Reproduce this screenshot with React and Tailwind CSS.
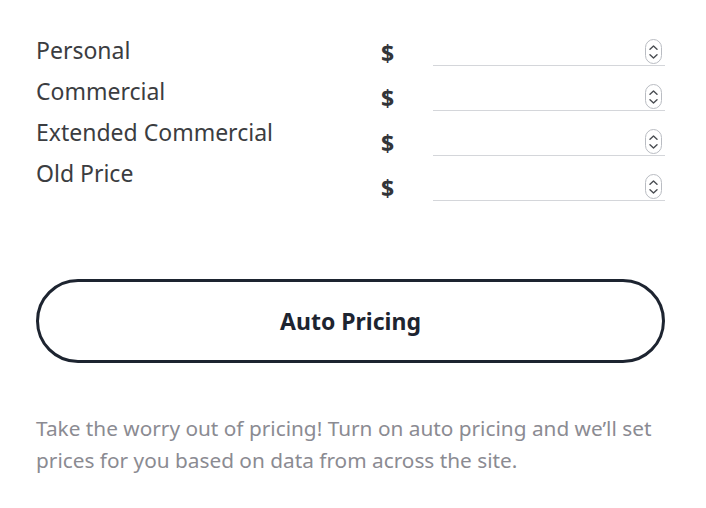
function Spinner() {
  return (
    <div className="absolute right-[3px] bottom-[1px] w-[17px] h-[25px] rounded-full border border-[#b9bcc2] bg-white flex flex-col items-center justify-center gap-[4px]">
      <svg width="9" height="5" viewBox="0 0 9 5" fill="none">
        <path d="M1 4.2 4.5 1 8 4.2" stroke="#4a4d52" strokeWidth="1.4" strokeLinecap="round" strokeLinejoin="round" />
      </svg>
      <svg width="9" height="5" viewBox="0 0 9 5" fill="none">
        <path d="M1 0.8 4.5 4 8 0.8" stroke="#4a4d52" strokeWidth="1.4" strokeLinecap="round" strokeLinejoin="round" />
      </svg>
    </div>
  );
}

function PriceRow() {
  return (
    <div className="flex items-end h-[45px]">
      <span className="w-[52px] leading-[22px] pb-[2px] text-[23px] font-bold text-[#333539]">$</span>
      <div className="relative flex-1 h-[28px] border-b border-[#d4d6da]">
        <Spinner />
      </div>
    </div>
  );
}

export default function App() {
  const labels = ["Personal", "Commercial", "Extended Commercial", "Old Price"];
  return (
    <div className="bg-white min-h-[508px] pl-9 pr-[41px] pt-[21px] font-['Noto_Sans',sans-serif]">
      <div className="flex">
        <div className="w-[345px] pt-[9px] text-[23px] leading-[41px] text-[#3b3d41]">
          {labels.map((l) => (
            <div key={l}>{l}</div>
          ))}
        </div>
        <div className="flex-1">
          {labels.map((l) => (
            <PriceRow key={l} />
          ))}
        </div>
      </div>
      <button className="mt-[78px] w-full h-[84px] rounded-full border-[3px] border-[#1d2430] text-[23px] font-bold text-[#1d2430]">
        Auto Pricing
      </button>
      <p className="mt-[49px] text-[20.8px] leading-[32px] text-[#8b8b92]">
        Take the worry out of pricing! Turn on auto pricing and we’ll set prices for you based on data from across the site.
      </p>
    </div>
  );
}
